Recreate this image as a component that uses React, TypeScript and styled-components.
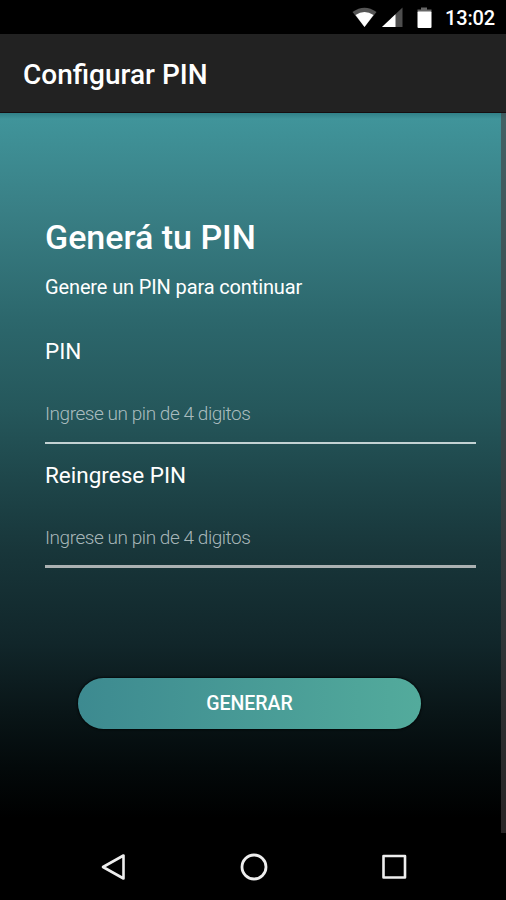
import React from "react";
import styled, { createGlobalStyle } from "styled-components";

const GlobalStyle = createGlobalStyle`
  * { box-sizing: border-box; }
  html, body { margin: 0; padding: 0; background: #000; }
  body { font-family: Roboto, "Liberation Sans", sans-serif; overflow: hidden; }
`;

const Screen = styled.div`
  width: 506px;
  height: 900px;
  display: flex;
  flex-direction: column;
  background: #000;
  color: #fff;
`;

const StatusBar = styled.div`
  height: 34px;
  flex: none;
  display: flex;
  align-items: center;
  justify-content: flex-end;
  padding-right: 11px;
`;

const StatusIcons = styled.svg`
  display: block;
  margin-right: 13px;
`;

const Clock = styled.span`
  font-size: 20px;
  line-height: 34px;
  font-weight: 500;
  letter-spacing: -0.15px;
  padding-top: 2px;
`;

const AppBar = styled.header`
  height: 79px;
  flex: none;
  display: flex;
  align-items: center;
  padding: 3px 0 0 23px;
  background: #222;
  border-bottom: 1px solid #160e10;
`;

const AppTitle = styled.h1`
  margin: 0;
  font-size: 28px;
  line-height: 32px;
  font-weight: 500;
`;

const Content = styled.main`
  height: 720px;
  flex: none;
  display: flex;
  justify-content: space-between;
  background: linear-gradient(
    180deg,
    #318087 0,
    #40949a 6px,
    #397f85 97px,
    #2c676c 207px,
    #25575b 297px,
    #1e464a 367px,
    #18363a 437px,
    #11262a 530px,
    #091517 600px,
    #03090a 655px,
    #000 705px
  );
`;

const Form = styled.form`
  width: 476px;
  padding: 104px 0 0 45px;
  display: flex;
  flex-direction: column;
`;

const Heading = styled.h2`
  margin: 0;
  font-size: 34px;
  line-height: 40px;
  font-weight: 500;
`;

const Subtitle = styled.p`
  margin: 18px 0 0;
  font-size: 20px;
  line-height: 24px;
  letter-spacing: -0.13px;
`;

const Field = styled.div<{ $top: number; $gap: number }>`
  margin-top: ${(p) => p.$top}px;
  display: flex;
  flex-direction: column;
  gap: ${(p) => p.$gap}px;
`;

const Label = styled.label`
  font-size: 22.5px;
  line-height: 28px;
`;

const PinInput = styled.input<{ $line: string; $weight: number }>`
  width: 431px;
  height: 44px;
  padding: 0 0 ${(p) => (p.$weight === 2 ? 16 : 14)}px;
  border: 0;
  border-bottom: ${(p) => p.$weight}px solid ${(p) => p.$line};
  border-radius: 0;
  outline: 0;
  background: transparent;
  color: #fff;
  font-family: inherit;
  font-size: 19px;
  font-weight: 300;
  letter-spacing: -0.45px;
  &::placeholder {
    color: rgba(205, 216, 218, 0.8);
    opacity: 1;
  }
`;

const SubmitButton = styled.button`
  width: 343px;
  height: 51px;
  margin: 110px 0 0 33px;
  padding: 0 0 1px;
  border: 0;
  border-radius: 26px;
  background: linear-gradient(90deg, #3d8a90, #53ab9c);
  box-shadow: 0 0 2px 1px rgba(0, 0, 0, 0.65);
  color: #fff;
  font-family: inherit;
  font-size: 19.5px;
  font-weight: 500;
`;

const ScrollTrack = styled.div`
  width: 5px;
  height: 720px;
  background: rgba(68, 64, 65, 0.6);
`;

const NavBar = styled.nav`
  flex: 1;
  display: flex;
  align-items: center;
  justify-content: space-between;
  padding: 0 97px 0 98px;
`;

const NavButton = styled.button`
  padding: 0;
  border: 0;
  background: none;
  display: flex;
`;

export default function App() {
  return (
    <>
      <GlobalStyle />
      <Screen>
        <StatusBar>
          <StatusIcons width="80" height="34" viewBox="0 0 80 34">
            <path d="M0.5 12Q12.500 3.500 24.500 12L12.500 27Z" fill="#555" />
            <path d="M3.500 15Q12.500 9 21.500 15L12.500 27Z" fill="#fff" />
            <path d="M50.500 7.500V27H30Z" fill="#4d4d4d" />
            <path d="M43.500 14.200V27H30Z" fill="#fff" />
            <path d="M69 7.500h6v2h4.500v3h-14v-3H69Z" fill="#666" />
            <rect x="65.500" y="11.500" width="14" height="16.500" rx="1" fill="#fff" />
          </StatusIcons>
          <Clock>13:02</Clock>
        </StatusBar>
        <AppBar>
          <AppTitle>Configurar PIN</AppTitle>
        </AppBar>
        <Content>
          <Form onSubmit={(e) => e.preventDefault()}>
            <Heading>Generá tu PIN</Heading>
            <Subtitle>Genere un PIN para continuar</Subtitle>
            <Field $top={38} $gap={35}>
              <Label htmlFor="pin">PIN</Label>
              <PinInput id="pin" placeholder="Ingrese un pin de 4 digitos" $line="#c3d2d3" $weight={2} />
            </Field>
            <Field $top={17} $gap={35}>
              <Label htmlFor="pin-repeat">Reingrese PIN</Label>
              <PinInput id="pin-repeat" placeholder="Ingrese un pin de 4 digitos" $line="#abb1b2" $weight={3} />
            </Field>
            <SubmitButton type="submit">GENERAR</SubmitButton>
          </Form>
          <ScrollTrack />
        </Content>
        <NavBar>
          <NavButton aria-label="Back">
            <svg width="30" height="30" viewBox="0 0 30 30" fill="none" stroke="#eee" strokeWidth="2.600" strokeLinejoin="round">
              <path d="M25.500 3.500V26.500L5 15Z" />
            </svg>
          </NavButton>
          <NavButton aria-label="Home">
            <svg width="30" height="30" viewBox="0 0 30 30" fill="none" stroke="#eee" strokeWidth="2.800">
              <circle cx="15" cy="15" r="12" />
            </svg>
          </NavButton>
          <NavButton aria-label="Recent apps">
            <svg width="30" height="30" viewBox="0 0 30 30" fill="none" stroke="#eee" strokeWidth="2.600" strokeLinejoin="round">
              <rect x="4.500" y="4" width="21.500" height="21.500" />
            </svg>
          </NavButton>
        </NavBar>
      </Screen>
    </>
  );
}
